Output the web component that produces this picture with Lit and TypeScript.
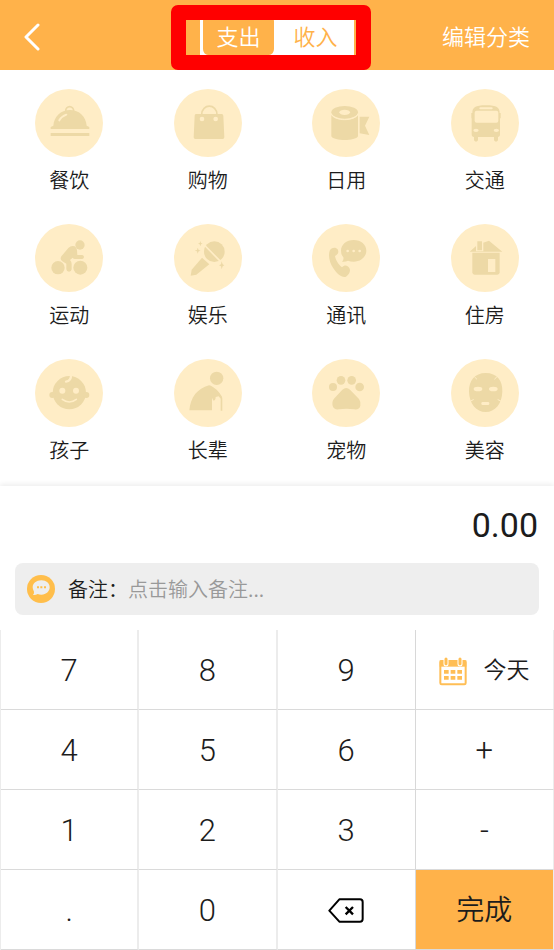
import { LitElement, html, svg, css, type SVGTemplateResult } from "lit";
import { customElement, property, state } from "lit/decorators.js";
import { classMap } from "lit/directives/class-map.js";

type Category = { id: string; label: string };

const CATEGORIES: Category[] = [
  { id: "food", label: "餐饮" },
  { id: "shopping", label: "购物" },
  { id: "daily", label: "日用" },
  { id: "transit", label: "交通" },
  { id: "sport", label: "运动" },
  { id: "fun", label: "娱乐" },
  { id: "phone", label: "通讯" },
  { id: "house", label: "住房" },
  { id: "child", label: "孩子" },
  { id: "elder", label: "长辈" },
  { id: "pet", label: "宠物" },
  { id: "beauty", label: "美容" },
];

// Glyphs share a 204-unit box; "fg" is the solid tone, "bg" cuts back to the disc colour.
const GLYPHS: Record<string, SVGTemplateResult> = {
  food: svg`
    <path class="fg-line" stroke-width="5" d="M92 66a12 13 0 1 1 24 0"/>
    <path class="fg" d="M47 120v-6l8-4c2-27 22-47 50-47s48 20 50 47l8 4v6z"/>
    <path class="bg-line" stroke-width="6" d="M73 94q7-12 21-17"/>
    <rect class="fg" x="47" y="132" width="116" height="9"/>`,
  shopping: svg`
    <path class="fg-line" stroke-width="5" d="M83 77c0-34 46-34 46 0"/>
    <path class="fg" d="M66 75h77q5 0 5 5l3 65q0 5-5 5H64q-5 0-5-5l3-65q0-5 4-5z"/>
    <circle class="bg" cx="84" cy="90" r="7"/><circle class="bg" cx="125" cy="90" r="7"/>`,
  daily: svg`
    <ellipse class="fg" cx="98" cy="70" rx="40" ry="19"/>
    <ellipse class="bg" cx="98" cy="70" rx="16" ry="8"/>
    <path class="fg" d="M58 77c8 20 72 20 80 0v65c-8 15-72 15-80 0z"/>
    <path class="bg-line" stroke-width="3" d="M58 75c8 23 72 23 80 0"/>
    <path class="fg" d="M143 83h29l-13 27 13 28-29-5z"/>`,
  transit: svg`
    <path class="fg" d="M61 72h3c0-16 8-23 41-23s41 7 41 23h3v14l-2 3v47q0 8-7 8H69q-7 0-7-8V89l-1-3z"/>
    <rect class="bg" x="71" y="65" width="71" height="36" rx="6"/>
    <rect class="bg" x="85" y="55" width="40" height="6" rx="3"/>
    <ellipse class="bg" cx="75" cy="124" rx="8" ry="5"/><ellipse class="bg" cx="136" cy="124" rx="8" ry="5"/>
    <path class="fg" d="M69 142h12v12q-6 8-12 0zM129 142h12v12q-6 8-12 0z"/>`,
  sport: svg`
    <circle class="fg" cx="135" cy="63" r="14"/>
    <circle class="fg" cx="69" cy="131" r="20"/><circle class="fg" cx="136" cy="131" r="21"/>
    <path class="fg" d="M79 97l21-25q8-8 19-5 7 4 7 12l1 14h15q5 1 5 6t-5 6h-22q-5 0-7-4l-8 7q5 5 5 12v16q-1 7-8 7t-8-7v-17l-13-8q-7-5-2-14z"/>`,
  fun: svg`
    <circle class="fg" cx="121" cy="83" r="31"/>
    <path class="bg-line" stroke-width="5" d="M91 63l52 53"/>
    <path class="fg" d="M84 101l22 20-39 31-17 3 3-18z"/>
    <path class="fg" d="M79 51l2 6 5 2-5 2-2 6-2-6-5-2 5-2zM71 71l3 7 6 2-6 2-3 7-2-7-7-2 7-2zM143 112l3 9 5 3-5 3-3 9-2-9-6-3 6-3z"/>`,
  phone: svg`
    <path class="fg" d="M125 48c22 0 38 14 38 32s-16 33-38 33q-10 0-17-3-7 4-18 3 6-6 4-13-7-8-7-20c0-18 16-32 38-32z"/>
    <circle class="bg" cx="107" cy="81" r="4"/><circle class="bg" cx="125" cy="81" r="4"/><circle class="bg" cx="143" cy="81" r="4"/>
    <path class="fg" d="M53 80c4-10 19-12 24-4 4 8 2 15-8 20 2 13 11 26 21 34 7-8 17-7 22 2 5 8 0 20-10 26-12 4-27-8-38-25C53 116 48 96 53 80z"/>`,
  house: svg`
    <path class="fg" d="M56 83l25-22 20-6 13-5 40 33z"/>
    <path class="bg" d="M75 49h22v33H75z"/><path class="fg" d="M79 52h14v27H79z"/>
    <path class="fg" d="M64 86h82v59q0 7-7 7H71q-7 0-7-7z"/>
    <rect class="bg" x="111" y="105" width="22" height="39"/>`,
  child: svg`
    <circle class="fg" cx="103" cy="101" r="50"/>
    <circle class="fg" cx="52" cy="108" r="9"/><circle class="fg" cx="154" cy="108" r="9"/>
    <circle class="bg" cx="82" cy="95" r="9"/><circle class="bg" cx="123" cy="95" r="9"/>
    <path class="bg-line" stroke-width="5" d="M82 121q21 16 42 0"/>
    <path class="bg-line" stroke-width="7" d="M108 47q1 19-15 21"/>`,
  elder: svg`
    <circle class="fg" cx="128" cy="58" r="20"/>
    <path class="fg" d="M46 154c3-38 24-66 59-75 9 1 27 14 36 30q4 4 4 10v36h-5v-36l-6-7-9 2q0 10-6 11-3-3-5-9v38z"/>`,
  pet: svg`
    <circle class="fg" cx="63" cy="84" r="12"/><circle class="fg" cx="87" cy="64" r="13"/>
    <circle class="fg" cx="119" cy="64" r="13"/><circle class="fg" cx="143" cy="84" r="13"/>
    <path class="fg" d="M91 92q12-10 23 0l27 28q6 8 4 20-3 13-18 11-24-4-46 0-15 2-19-10-3-14 4-22z"/>`,
  beauty: svg`
    <path class="fg" d="M104 42c34 0 52 24 50 56-1 36-22 61-50 61S55 134 54 98C53 66 71 42 104 42z"/>
    <ellipse class="bg" cx="81" cy="90" rx="13" ry="7"/><ellipse class="bg" cx="127" cy="90" rx="13" ry="7"/>
    <rect class="bg" x="91" y="129" width="24" height="9" rx="4"/>
    <path class="bg-line" stroke-width="3" d="M71 54l6 6M137 54l-6 6M59 126l8-4M149 126l-8-4"/>`,
};

@customElement("category-tile")
export class CategoryTile extends LitElement {
  @property() icon = "";
  @property() label = "";

  static styles = css`
    :host { display: block; }
    .tile {
      display: flex; flex-direction: column; align-items: center; gap: 9px;
      width: 100%; padding: 0; border: 0; background: none; cursor: pointer;
      color: #1c1c1c; font: inherit; font-size: 20px; line-height: 28px;
    }
    .disc { display: block; width: 68px; height: 68px; border-radius: 50%; background: #ffedc6; }
    .fg { fill: #edd9a6; }
    .bg { fill: #ffedc6; }
    .fg-line { fill: none; stroke: #edd9a6; }
    .bg-line { fill: none; stroke: #ffedc6; stroke-linecap: round; }
  `;

  render() {
    return html`<button class="tile" type="button">
      <svg class="disc" viewBox="0 0 204 204" aria-hidden="true">${GLYPHS[this.icon]}</svg>
      <span>${this.label}</span>
    </button>`;
  }
}

@customElement("key-pad")
export class KeyPad extends LitElement {
  static styles = css`
    :host { display: block; }
    .pad {
      display: grid; grid-template-columns: repeat(4, 1fr); grid-auto-rows: 80px;
      border-left: 1px solid #ececec;
    }
    .key {
      display: flex; align-items: center; justify-content: center; gap: 16px;
      padding: 3px 0 0; border: 0; border-right: 2px solid #ececec; border-bottom: 1px solid #dadada;
      background: #fff; color: #1c1c1c; cursor: pointer;
      font: 300 31px/40px Roboto, "Noto Sans CJK SC", sans-serif;
    }
    .third { border-right: 1px solid #d8d8d8; }
    .last { border-right: 1px solid #ececec; }
    .today { font-size: 23px; font-weight: 350; }
    .done { font-size: 28px; font-weight: 350; background: #ffb24a; }
    .calendar { width: 28px; height: 29px; }
    .erase { width: 36px; height: 26px; }
  `;

  render() {
    const key = (text: string, edge = "") => html`<button type="button" class="key ${edge}">${text}</button>`;
    return html`<div class="pad">
      ${key("7")}${key("8")}${key("9", "third")}
      <button type="button" class="key last today">
        <svg class="calendar" viewBox="0 0 84 87" aria-hidden="true">
          <rect x="4" y="12" width="76" height="70" rx="4" fill="#fff" stroke="#ffbe55" stroke-width="6" />
          <path d="M2 10h80v19H2z" fill="#ffbe55" />
          <path d="M21 5v16M63 5v16" stroke="#fff" stroke-width="15" stroke-linecap="round" />
          <path d="M21 6v14M63 6v14" stroke="#ffbe55" stroke-width="9" stroke-linecap="round" />
          <path d="M15 39h14v11H15zM35 39h14v11H35zM55 39h14v11H55zM15 57h14v11H15zM35 57h14v11H35zM55 57h14v11H55z" fill="#ffbe55" />
        </svg>
        <span>今天</span>
      </button>
      ${key("4")}${key("5")}${key("6", "third")}${key("+", "last")}
      ${key("1")}${key("2")}${key("3", "third")}${key("-", "last")}
      ${key(".")}${key("0")}
      <button type="button" class="key third" aria-label="删除">
        <svg class="erase" viewBox="0 0 108 78" fill="none" stroke="#000" aria-hidden="true">
          <path d="M34 4h62q8 0 8 8v51q0 8-8 8H34L4 38z" stroke-width="6" stroke-linejoin="round" />
          <path d="M53 27l22 22M75 27L53 49" stroke-width="7" />
        </svg>
      </button>
      ${key("完成", "last done")}
    </div>`;
  }
}

@customElement("app-root")
export class AppRoot extends LitElement {
  @state() private mode: "out" | "in" = "out";
  @state() private amount = "0.00";

  static styles = css`
    :host {
      display: block; background: #fff; color: #1c1c1c;
      font-family: Roboto, "Noto Sans CJK SC", sans-serif;
    }
    .bar {
      display: grid; grid-template-columns: 1fr auto 1fr; align-items: center;
      height: 70px; padding: 0 24px; background: #ffb24a;
    }
    .back { justify-self: start; display: flex; padding: 0; border: 0; background: none; cursor: pointer; }
    .chevron { width: 18px; height: 32px; }
    .edit {
      justify-self: end; color: #fff; text-decoration: none;
      font: 350 22px/32px "Noto Sans CJK SC", sans-serif;
    }
    .switch { position: relative; display: flex; height: 44px; background: #fff; }
    .tab {
      width: 77px; padding: 0; border: 2px solid #fff; border-width: 2px 3px; border-radius: 8px; background: #fff;
      color: #ffb24a; cursor: pointer; font: 350 22px/40px "Noto Sans CJK SC", sans-serif;
    }
    .active { background: #ffb24a; color: #fff; }
    .marker {
      position: absolute; top: -8px; bottom: -13px; left: -29px; right: -17px;
      border: 15px solid #f00; border-radius: 7px; pointer-events: none;
    }
    .grid {
      display: grid; grid-template-columns: repeat(4, 1fr); row-gap: 30px;
      padding: 19px 0 22px; font-family: "Noto Sans CJK SC", sans-serif; font-weight: 350;
    }
    .sheet { box-shadow: 0 -2px 5px rgba(0, 0, 0, 0.07); background: #fff; }
    .amount {
      display: block; padding: 19px 16px 18px; text-align: right; font-size: 34px; font-weight: 400; line-height: 40px;
    }
    .note {
      display: flex; align-items: center; height: 52px; margin: 0 15px 15px; padding: 0 12px;
      border-radius: 8px; background: #eee; font: 350 20px/28px "Noto Sans CJK SC", sans-serif;
    }
    .bubble { width: 28px; height: 28px; margin-right: 13px; }
    .field {
      flex: 1; min-width: 0; padding: 0; border: 0; outline: 0; background: none; color: #1c1c1c; font: inherit;
    }
    .field::placeholder { color: #999; opacity: 1; }
  `;

  private tab(mode: "out" | "in", label: string) {
    const active = this.mode === mode;
    return html`<button type="button" class=${classMap({ tab: true, active })}
      aria-pressed=${active} @click=${() => (this.mode = mode)}>${label}</button>`;
  }

  render() {
    return html`
      <header class="bar">
        <button class="back" type="button" aria-label="返回">
          <svg class="chevron" viewBox="0 0 18 32" aria-hidden="true">
            <path d="M14 6L2 18l12 12" fill="none" stroke="#fff" stroke-width="3" stroke-linecap="round" stroke-linejoin="round" />
          </svg>
        </button>
        <div class="switch">
          ${this.tab("out", "支出")}${this.tab("in", "收入")}
          <span class="marker"></span>
        </div>
        <a class="edit" href="#edit">编辑分类</a>
      </header>
      <main>
        <div class="grid">
          ${CATEGORIES.map((c) => html`<category-tile .icon=${c.id} .label=${c.label}></category-tile>`)}
        </div>
        <section class="sheet">
          <output class="amount">${this.amount}</output>
          <div class="note">
            <svg class="bubble" viewBox="0 0 84 84" aria-hidden="true">
              <circle cx="42" cy="42" r="42" fill="#ffbe4b" />
              <path d="M43 16c15 0 25 9 25 21s-10 22-25 22q-6 0-11-2-6 4-14 3 4-5 3-10-4-6-4-13c0-12 11-21 26-21z" fill="#eee" />
              <path d="M30 34h6v6h-6zM40 34h6v6h-6zM51 34h6v6h-6z" fill="#ffbe4b" />
            </svg>
            <label for="note">备注：</label>
            <input class="field" id="note" type="text" placeholder="点击输入备注..." />
          </div>
          <key-pad></key-pad>
        </section>
      </main>
    `;
  }
}
